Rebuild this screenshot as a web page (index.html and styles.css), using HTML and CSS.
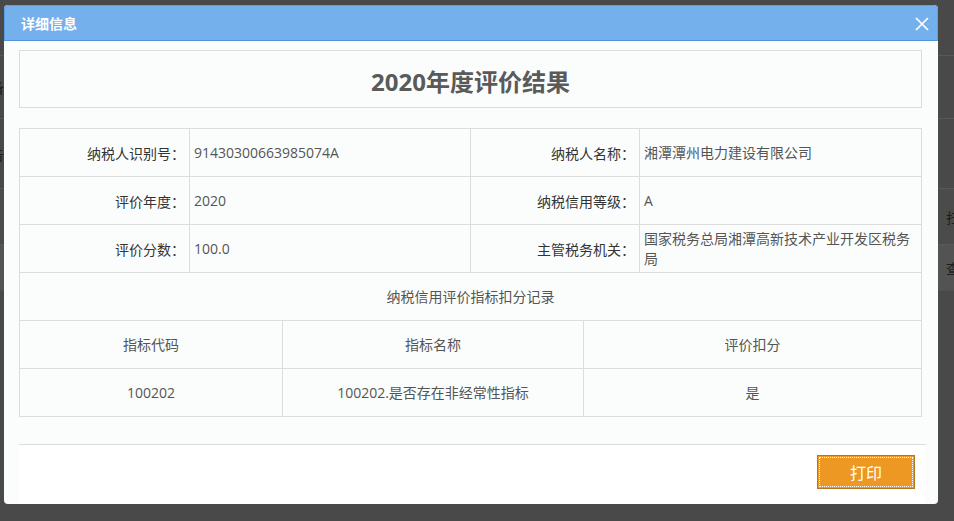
FILE: index.html
```html
<!DOCTYPE html>
<html lang="zh-CN">
<head>
<meta charset="utf-8">
<title>详细信息</title>
<link rel="stylesheet" href="styles.css">
</head>
<body>
<div class="page">
  <div class="page-row r1"></div>
  <div class="page-row r2"><span class="pl">备</span></div>
  <div class="page-row r3"><span class="pl">告</span></div>
  <div class="page-row r4"><span class="pr">扫</span></div>
  <div class="page-row r5"><span class="pr">查</span></div>
  <div class="page-row r6"></div>
</div>

<div class="dialog">
  <div class="dialog-head">
    <span class="dialog-title">详细信息</span>
    <svg class="close" width="14" height="14" viewBox="0 0 14 14"><path d="M1 1 L13 13 M13 1 L1 13" stroke="#fff" stroke-width="1.7" fill="none"/></svg>
  </div>
  <div class="dialog-body">
    <div class="title-box">2020年度评价结果</div>
    <div class="grid info">
      <div class="c lab">纳税人识别号：</div>
      <div class="c val">91430300663985074A</div>
      <div class="c lab">纳税人名称：</div>
      <div class="c val">湘潭潭州电力建设有限公司</div>
      <div class="c lab">评价年度：</div>
      <div class="c val">2020</div>
      <div class="c lab">纳税信用等级：</div>
      <div class="c val">A</div>
      <div class="c lab">评价分数：</div>
      <div class="c val">100.0</div>
      <div class="c lab">主管税务机关：</div>
      <div class="c val">国家税务总局湘潭高新技术产业开发区税务局</div>
      <div class="c mid span4">纳税信用评价指标扣分记录</div>
    </div>
    <div class="grid deduct">
      <div class="c mid">指标代码</div>
      <div class="c mid">指标名称</div>
      <div class="c mid">评价扣分</div>
      <div class="c mid">100202</div>
      <div class="c mid">100202.是否存在非经常性指标</div>
      <div class="c mid">是</div>
    </div>
  </div>
  <div class="dialog-foot">
    <button class="btn-print">打印</button>
  </div>
</div>
</body>
</html>
```
FILE: styles.css
```css
* { box-sizing: border-box; }
html, body { margin: 0; padding: 0; }
body {
  width: 954px;
  height: 521px;
  background: #494949;
  font-family: "Open Sans", "Noto Sans CJK SC", sans-serif;
  font-size: 14px;
  overflow: hidden;
  position: relative;
}

/* backdrop page */
.page { width: 954px; }
.page-row {
  border-bottom: 1px solid #585858;
  display: flex;
  justify-content: space-between;
  align-items: center;
  color: #1e1e1e;
  font-family: "Noto Sans CJK SC", sans-serif;
  font-size: 14px;
}
.r1 { height: 56px; }
.r2 { height: 63px; }
.r3 { height: 70px; }
.r4 { height: 56px; background: #4b4b4b; }
.r5 { height: 46px; background: #535353; border-bottom: 1px solid #4f4f4f; }
.r6 { height: 60px; border-bottom: none; }
.pl { margin-left: -10px; }
.pr { margin-right: -6px; margin-left: auto; }

/* dialog */
.dialog {
  position: absolute;
  left: 4px;
  top: 5px;
  width: 934px;
  height: 499px;
  background: #fbfdfd;
  border-radius: 4px;
  display: flex;
  flex-direction: column;
  overflow: hidden;
}
.dialog-head {
  height: 36px;
  background: #74b0ec;
  border: 1px solid #5d9fe0;
  border-bottom: 1px solid #4f95da;
  border-radius: 4px 4px 0 0;
  display: flex;
  align-items: center;
  justify-content: space-between;
  padding: 0 8px 0 16px;
}
.dialog-title {
  color: #fff;
  font-family: "Noto Sans CJK SC", sans-serif;
  font-weight: bold;
  font-size: 14px;
}
.close { display: block; margin-top: 1px; }

.dialog-body {
  padding: 9px 15px 0 15px;
  flex: 1;
}
.title-box {
  height: 58px;
  width: 903px;
  border: 1px solid #dcdcdc;
  display: flex;
  align-items: center;
  justify-content: center;
  font-size: 24px;
  font-weight: bold;
  color: #5a5a5a;
  padding-top: 2px;
}

.grid {
  display: grid;
  width: 903px;
  border-left: 1px solid #dcdcdc;
}
.info {
  margin-top: 20px;
  border-top: 1px solid #dcdcdc;
  grid-template-columns: 170px 281px 169px 282px;
  grid-auto-rows: 48px;
}
.deduct {
  grid-template-columns: 263px 301px 338px;
  grid-auto-rows: 48px;
}
.c {
  border-right: 1px solid #dcdcdc;
  border-bottom: 1px solid #dcdcdc;
  display: flex;
  align-items: center;
  padding: 0 5px;
  line-height: 20px;
  color: #555;
}
.lab { justify-content: flex-end; color: #333; font-family: "Noto Sans CJK SC", sans-serif; padding-right: 4px; }
.val { justify-content: flex-start; padding-left: 4px; padding-right: 8px; }
.mid { justify-content: center; text-align: center; }
.span4 { grid-column: span 4; }

.dialog-foot {
  margin: 0 12px 0 15px;
  height: 60px;
  background: #fff;
  border-top: 1px solid #dcdcdc;
  display: flex;
  justify-content: flex-end;
  align-items: flex-start;
  padding: 10px 11px 0 0;
}
.btn-print {
  width: 98px;
  height: 34px;
  background: #ec9822;
  border: 1px solid #b8761a;
  outline: 1px dotted #fff;
  outline-offset: -3px;
  color: #fff;
  font-family: "Noto Sans CJK SC", sans-serif;
  font-size: 16px;
  padding: 0;
  cursor: pointer;
}
```
